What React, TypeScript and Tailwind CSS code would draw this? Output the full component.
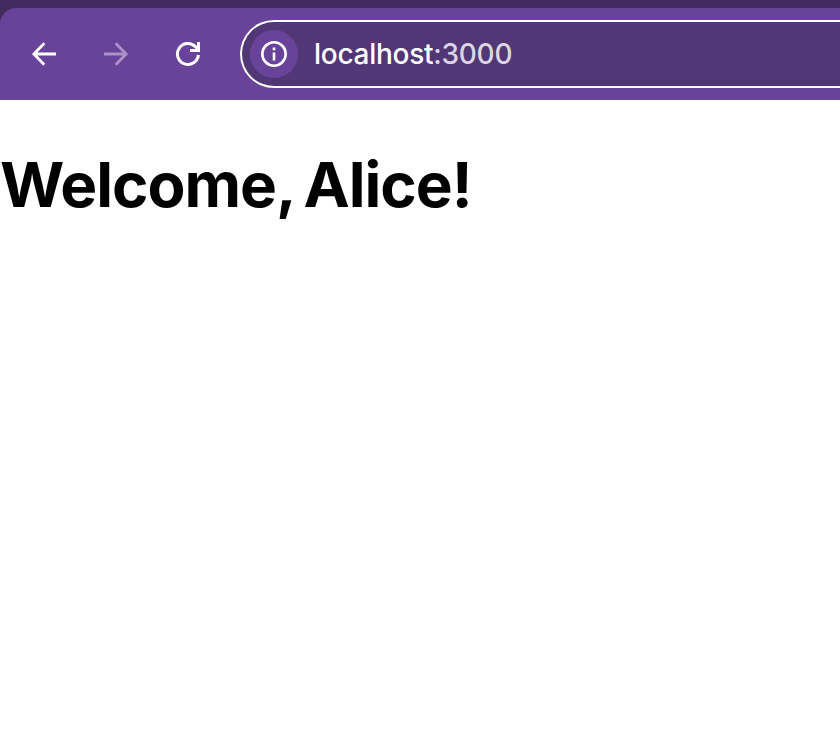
function BackIcon() {
  return (
    <svg width="26" height="26" viewBox="0 0 26 26" fill="none" stroke="currentColor" strokeWidth="2.8">
      <path d="M25 13H3M13.3 2.2L2.9 13l10.4 10.8" />
    </svg>
  );
}

function ReloadIcon() {
  return (
    <svg width="26" height="26" viewBox="0 0 26 26" fill="none" stroke="currentColor" strokeWidth="3">
      <path d="M23.4 14A10.5 10.5 0 1 1 20.4 5.6L23 8.6" />
      <path d="M23.5 1V9.5H15" />
    </svg>
  );
}

export default function App() {
  return (
    <div className="flex h-[732px] w-[840px] flex-col overflow-hidden bg-white font-['Inter',sans-serif]">
      <header className="h-[100px] bg-[#432b60] pt-2">
        <div className="flex h-[92px] items-center rounded-tl-[16px] bg-[#694399] pl-[31px] text-white">
          <button className="h-[26px] w-[26px]" aria-label="Back"><BackIcon /></button>
          <button className="ml-[46px] h-[26px] w-[26px] rotate-180 text-[#ab92c9]" aria-label="Forward"><BackIcon /></button>
          <button className="ml-[46px] h-[26px] w-[26px]" aria-label="Reload"><ReloadIcon /></button>
          <div className="ml-[39px] flex h-[68px] flex-1 items-center rounded-l-full border-2 border-r-0 border-white bg-[#513775] pl-2">
            <span className="flex h-12 w-12 items-center justify-center rounded-full bg-[#694399]">
              <svg width="26" height="26" viewBox="0 0 26 26" fill="none" stroke="currentColor" strokeWidth="2.6">
                <circle cx="13" cy="13" r="11.7" />
                <path d="M13 11.5V19.5M13 6.5V9.2" />
              </svg>
            </span>
            <span className="ml-4 whitespace-nowrap text-[28px] font-medium leading-8 tracking-[-0.27px]">
              localhost<span className="text-[#dcd5e5]">:3000</span>
            </span>
          </div>
        </div>
      </header>
      <main className="pt-[46px]">
        <h1 className="whitespace-nowrap text-[62px] font-bold leading-[78px] tracking-[-1px] [word-spacing:-4px]">Welcome, Alice!</h1>
      </main>
    </div>
  );
}
